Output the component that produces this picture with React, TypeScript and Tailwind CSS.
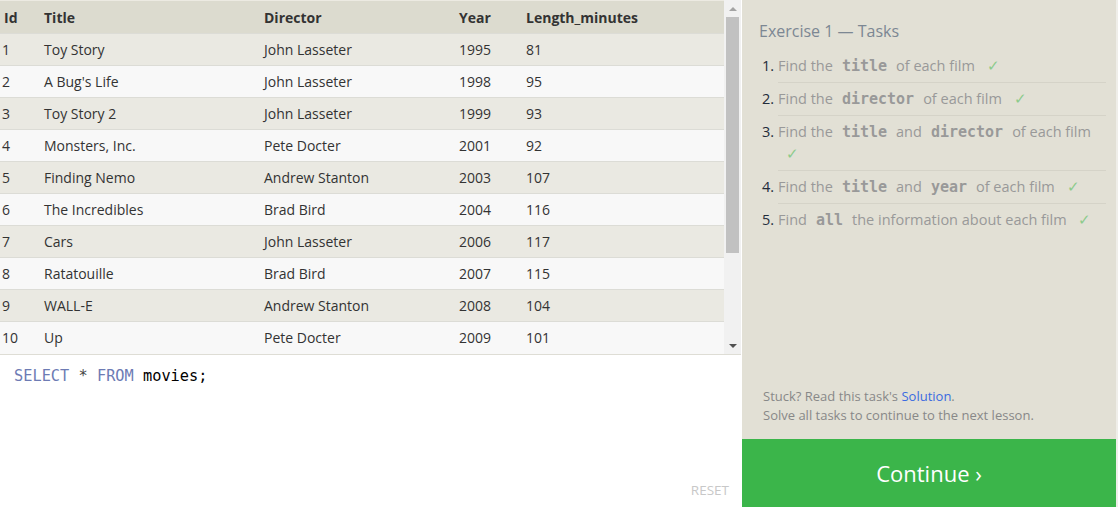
import { ReactNode } from 'react'

const movies = [
  [1, 'Toy Story', 'John Lasseter', 1995, 81],
  [2, "A Bug's Life", 'John Lasseter', 1998, 95],
  [3, 'Toy Story 2', 'John Lasseter', 1999, 93],
  [4, 'Monsters, Inc.', 'Pete Docter', 2001, 92],
  [5, 'Finding Nemo', 'Andrew Stanton', 2003, 107],
  [6, 'The Incredibles', 'Brad Bird', 2004, 116],
  [7, 'Cars', 'John Lasseter', 2006, 117],
  [8, 'Ratatouille', 'Brad Bird', 2007, 115],
  [9, 'WALL-E', 'Andrew Stanton', 2008, 104],
  [10, 'Up', 'Pete Docter', 2009, 101],
]

function Code({ children }: { children: ReactNode }) {
  return (
    <code className="mx-[9px] font-['DejaVu_Sans_Mono',monospace] text-[15px] font-bold text-[#999]">
      {children}
    </code>
  )
}

function Check() {
  return <span className="ml-[8px] inline-block text-[#8ccb8c]">✓</span>
}

const tasks: ReactNode[] = [
  <>Find the<Code>title</Code>of each film <Check /></>,
  <>Find the<Code>director</Code>of each film <Check /></>,
  <>Find the<Code>title</Code>and<Code>director</Code>of each film <Check /></>,
  <>Find the<Code>title</Code>and<Code>year</Code>of each film <Check /></>,
  <>Find<Code>all</Code>the information about each film <Check /></>,
]

export default function App() {
  return (
    <div className="flex h-[507px] w-[1118px] overflow-hidden bg-white font-['Open_Sans',sans-serif] text-[14px]">
      {/* left: results + editor */}
      <div className="flex w-[741px] flex-col">
        <div className="flex h-[355px] border-b border-[#deddd5]">
          <div className="w-[724px]">
            <table className="w-full border-collapse text-left text-[#333]">
              <thead>
                <tr className="h-[33px] border-t border-[#eceae2] bg-[#dcdbcf]">
                  <th className="w-[40px] pl-[4px] font-bold">Id</th>
                  <th className="w-[220px] pl-[4px] font-bold">Title</th>
                  <th className="w-[195px] pl-[4px] font-bold">Director</th>
                  <th className="w-[67px] pl-[4px] font-bold">Year</th>
                  <th className="pl-[4px] font-bold">Length_minutes</th>
                </tr>
              </thead>
              <tbody>
                {movies.map((m, i) => (
                  <tr
                    key={m[0]}
                    className={`h-[32px] border-t border-[#dcdcd6] ${i % 2 === 0 ? 'bg-[#eae9e2]' : 'bg-[#f8f8f8]'}`}
                  >
                    <td className="pl-[2px]">{m[0]}</td>
                    <td className="pl-[4px]">{m[1]}</td>
                    <td className="pl-[4px]">{m[2]}</td>
                    <td className="pl-[4px]">{m[3]}</td>
                    <td className="pl-[4px]">{m[4]}</td>
                  </tr>
                ))}
              </tbody>
            </table>
          </div>
          {/* scrollbar */}
          <div className="flex w-[17px] flex-col items-center bg-[#f1f1f1]">
            <div className="flex h-[17px] items-center justify-center">
              <div className="h-0 w-0 border-x-[4px] border-b-[4px] border-x-transparent border-b-[#a3a3a3]" />
            </div>
            <div className="h-[236px] w-[13px] bg-[#c1c1c1]" />
            <div className="flex-1" />
            <div className="flex h-[17px] items-center justify-center">
              <div className="h-0 w-0 border-x-[4px] border-t-[4px] border-x-transparent border-t-[#505050]" />
            </div>
          </div>
        </div>
        <div className="relative flex-1 bg-white">
          <div className="pl-[14px] pt-[10px] font-['DejaVu_Sans_Mono',monospace] text-[15.3px]">
            <span className="text-[#6d7bb4]">SELECT</span> <span className="text-[#444]">*</span>{' '}
            <span className="text-[#6d7bb4]">FROM</span> <span className="text-black">movies;</span>
          </div>
          <span className="absolute bottom-[7px] right-[12px] text-[13.5px] text-[#c8c8c8]">RESET</span>
        </div>
      </div>

      {/* right: tasks */}
      <div className="ml-[1px] flex w-[374px] flex-col bg-[#e2e0d5]">
        <div className="flex-1 pl-[17px] pr-[10px] pt-[19px]">
          <h2 className="text-[16px] font-normal text-[#7c8793]">Exercise 1 — Tasks</h2>
          <ol className="mt-[7px] pl-[3px]">
            {tasks.map((t, i) => (
              <li key={i} className="flex">
                <span className="w-[16px] shrink-0 pt-[5px] text-[14.5px] leading-[22px] text-[#222c3a]">{i + 1}.</span>
                <div
                  className={`flex-1 py-[5px] text-[14.5px] leading-[22px] text-[#999] ${i < 4 ? 'border-b border-[#d5d3c8]' : ''}`}
                >
                  {t}
                </div>
              </li>
            ))}
          </ol>
        </div>
        <div className="px-[21px] pb-[14px] text-[13px] leading-[19px] text-[#888]">
          <p>
            Stuck? Read this task's <span className="text-[#3a6be0]">Solution</span>.
          </p>
          <p>Solve all tasks to continue to the next lesson.</p>
        </div>
        <div className="flex h-[68px] items-center justify-center bg-[#3bb54a] text-[22px] text-white">
          Continue ›
        </div>
      </div>
      <div className="w-[2px] bg-[#efeee9]" />
    </div>
  )
}
